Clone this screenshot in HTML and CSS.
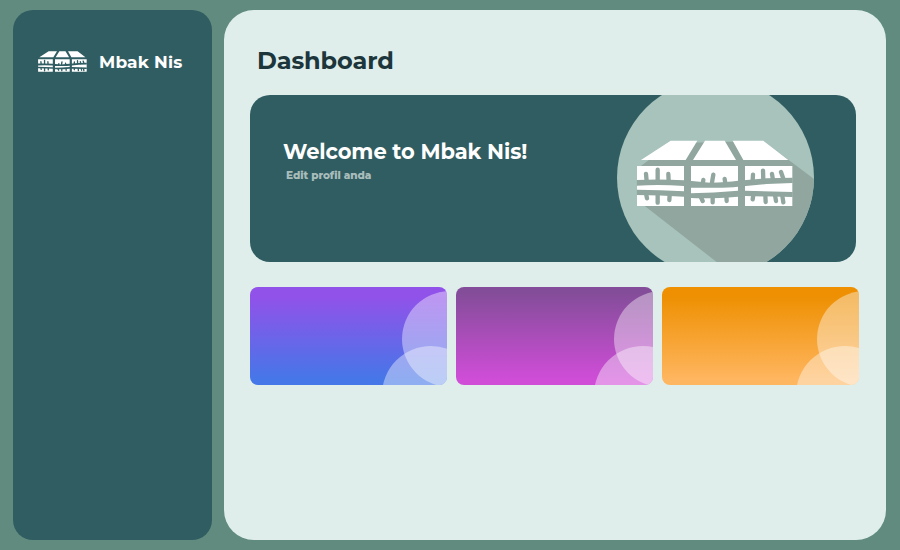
FILE: index.html
```html
<!DOCTYPE html>
<html lang="id">
<head>
<meta charset="utf-8">
<title>Mbak Nis</title>
<link rel="stylesheet" href="styles.css">
</head>
<body>
<svg class="defs" aria-hidden="true">
  <symbol id="stall" viewBox="80 150 470 200">
    <path fill="#fff" d="M182 152H262L227 210H93ZM285 152H344L378 210H249ZM368 152H460L535 210H400ZM81 228H222V348H81ZM243 228H384V348H243ZM405 228H547V348H405Z"/>
    <g class="gap">
      <path d="M80 270Q150 267 222 271L300 278Q350 276 384 272L470 265L548 263V279L470 282L384 290Q350 294 300 293H243L222 288Q150 283 80 287Z"/>
      <path d="M80 299Q150 299 222 304L243 310Q310 309 384 302H405L548 306V321L405 318L384 320Q300 327 243 324L222 320Q150 316 80 315Z"/>
    </g>
    <path class="twigs" d="M108 252L110 273M143 239V275M175 252L176 275M280 270L278 283M310 254L305 283M344 267L346 280M429 254L428 271M459 242L460 271M486 252L489 270M513 246L520 266M109 315L111 325M143 315V338M179 315L178 330M272 320L278 333M308 320V337M349 315L350 333M430 315L428 328M466 315L467 336M495 315L498 333M517 318L520 337"/>
  </symbol>
</svg>
<div class="app">
  <aside class="sidebar">
    <div class="brand">
      <svg class="brand-logo" viewBox="80 150 470 200" preserveAspectRatio="none"><use href="#stall" x="80" y="150" width="470" height="200"/></svg>
      <span class="brand-name">Mbak Nis</span>
    </div>
  </aside>
  <main class="main">
    <h1 class="title">Dashboard</h1>
    <section class="banner">
      <div class="greeting">
        <h2 class="welcome">Welcome to Mbak Nis!</h2>
        <a class="edit">Edit profil anda</a>
      </div>
      <svg class="emblem" viewBox="21 15 591 501">
        <defs><clipPath id="disc"><circle cx="316.5" cy="263" r="295.5"/></clipPath></defs>
        <circle cx="316.5" cy="263" r="295.5" fill="#a7c3bb"/>
        <path clip-path="url(#disc)" fill="#90a69f" d="M182 160L460 153L612 267V516H320L90 337V230Z"/>
        <use href="#stall" x="80" y="150" width="470" height="200"/>
      </svg>
    </section>
    <section class="cards">
      <div class="card violet"></div>
      <div class="card magenta"></div>
      <div class="card orange"></div>
    </section>
  </main>
</div>
</body>
</html>
```

FILE: styles.css
```css
* { box-sizing: border-box; }
body {
  margin: 0;
  height: 550px;
  overflow: hidden;
  background: #608b7e;
  font-family: Montserrat, Inter, "Open Sans", sans-serif;
}
.defs { display: none; }
.app {
  display: flex;
  gap: 12px;
  height: 550px;
  padding: 10px 14px 10px 13px;
}
.sidebar {
  --gap: #305d62;
  width: 199px;
  padding: 40px 0 0 25px;
  border-radius: 20px;
  background: #305d62;
}
.brand { display: flex; align-items: center; gap: 12px; height: 24px; }
.brand-logo { width: 49px; height: 21px; margin-top: -1px; }
.brand-name {
  color: #fff;
  font-size: 17px;
  font-weight: 700;
  line-height: 24px;
  letter-spacing: .15px;
  white-space: nowrap;
}
.main {
  flex: 1;
  padding: 37px 27px 0 26px;
  border-radius: 30px;
  background: #dfeeeb;
}
.title {
  margin: 0 0 20px 7px;
  height: 28px;
  color: #1c363b;
  font-size: 24px;
  font-weight: 700;
  line-height: 28px;
  letter-spacing: -.1px;
}
.banner {
  --gap: #90a69f;
  display: flex;
  justify-content: space-between;
  width: 606px;
  height: 167px;
  padding-right: 42px;
  border-radius: 20px;
  background: #305d62;
  overflow: hidden;
}
.greeting { padding: 43px 0 0 33px; white-space: nowrap; }
.welcome {
  margin: 0;
  color: #fff;
  font-size: 21px;
  font-weight: 700;
  line-height: 27px;
  letter-spacing: -.1px;
}
.edit {
  display: block;
  margin: 3px 0 0 3px;
  color: #a8bcba;
  font-size: 10.5px;
  font-weight: 800;
  line-height: 15px;
  letter-spacing: -.05px;
}
.emblem { flex: none; width: 197px; height: 167px; }
.gap { fill: var(--gap); }
.twigs { fill: none; stroke: var(--gap); stroke-width: 13; stroke-linecap: round; }
.cards { display: flex; gap: 9px; margin-top: 25px; }
.card {
  position: relative;
  flex: none;
  width: 197px;
  height: 98px;
  border-radius: 8px;
  overflow: hidden;
}
.card::before,
.card::after {
  content: "";
  position: absolute;
  border-radius: 50%;
  background: rgba(255, 255, 255, .4);
}
.card::before { left: var(--upper); top: 4px; width: 96px; height: 96px; }
.card::after { left: var(--lower); top: 59px; width: 98px; height: 98px; }
.violet { --upper: 152px; --lower: 132px; background: linear-gradient(#9152ea 10%, #4577e8 95%); }
.magenta { --upper: 158px; --lower: 138px; background: linear-gradient(#834d99 5%, #d04dd8 95%); }
.orange { --upper: 155px; --lower: 134px; background: linear-gradient(#ee9002 10%, #ffb660 95%); }
```
